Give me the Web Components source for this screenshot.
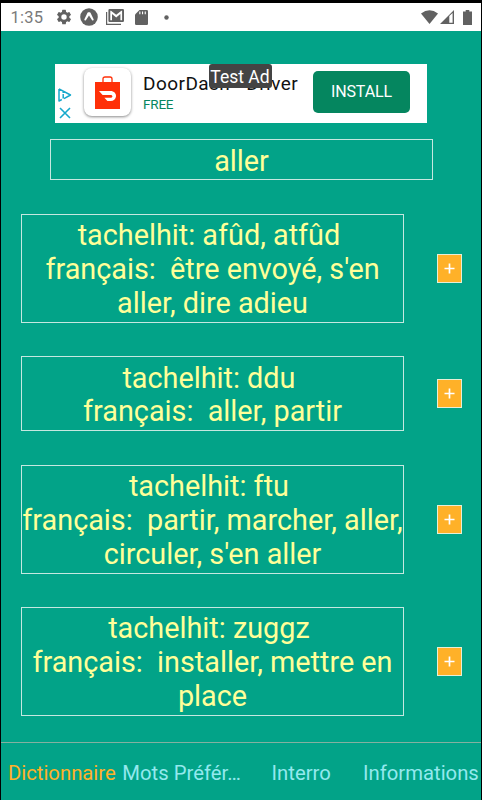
<!DOCTYPE html>
<html lang="fr">
<head>
<meta charset="utf-8">
<title>Dictionnaire</title>
<style>
html,body{margin:0;height:100%;background:#000;overflow:hidden}
body{font-family:Roboto,"Noto Sans",sans-serif}
</style>
</head>
<body>
<dict-app></dict-app>
<script>
const define = (name, html) => {
  const t = document.createElement('template');
  t.innerHTML = html;
  customElements.define(name, class extends HTMLElement {
    constructor() {
      super();
      this.attachShadow({ mode: 'open' }).append(t.content.cloneNode(true));
    }
  });
};

define('status-bar', `
<style>
:host{display:flex;align-items:center;justify-content:space-between;height:28px;box-sizing:border-box;background:#fff;color:#7a7a7a;padding:0 9px 0 9.500px;font-size:16.5px;letter-spacing:.2px}
.l,.r{display:flex;align-items:center}
svg{display:block;fill:#616161}
.time{width:44px;line-height:28px;padding-top:2px;white-space:nowrap}
</style>
<div class="l">
  <span class="time">1:35</span>
  <svg width="18" height="18" viewBox="0 0 24 24"><path d="M19.14 12.94c.04-.3.06-.61.06-.94s-.02-.64-.07-.94l2.03-1.58a.5.5 0 0 0 .12-.61l-1.92-3.32a.49.49 0 0 0-.59-.22l-2.39.96a7 7 0 0 0-1.62-.94l-.36-2.54A.48.48 0 0 0 13.92 2.400h-3.840a.48.48 0 0 0-.47.41l-.36 2.540a7 7 0 0 0-1.620.94l-2.390-.96a.48.48 0 0 0-.59.22L2.740 8.870a.48.48 0 0 0 .12.61l2.030 1.580a6 6 0 0 0 0 1.880l-2.030 1.580a.5.5 0 0 0-.12.61l1.920 3.320c.12.22.37.29.59.22l2.390-.96c.5.38 1.030.7 1.620.94l.36 2.540c.05.24.24.41.47.41h3.840c.24 0 .44-.17.47-.41l.36-2.540a7 7 0 0 0 1.620-.94l2.390.96c.22.08.47 0 .59-.22l1.920-3.320a.48.48 0 0 0-.12-.61zM12 15.600a3.600 3.600 0 1 1 0-7.200 3.600 3.600 0 0 1 0 7.200z"/></svg>
  <svg style="margin-left:7.500px" width="18" height="18" viewBox="0 0 18 18"><circle cx="9" cy="9" r="8.800"/><path fill="#fff" d="M8.200 4.300h1.600c.4 0 .6.3.8.700l3 6.300c.4.900-.8 1.700-1.500.9L9 7.500l-3.100 4.700c-.7.800-1.900 0-1.500-.9l3-6.300c.2-.4.400-.7.8-.7z"/></svg>
  <svg style="margin-left:8px" width="18" height="16" viewBox="0 0 18 16"><path d="M0 3h1.200v11.800H15V16H0z"/><path fill-rule="evenodd" d="M3.600 0h13.200q1.200 0 1.200 1.200v10.600q0 1.200-1.200 1.200H3.600q-1.200 0-1.200-1.200V1.200Q2.400 0 3.600 0zM4.300 1.700v9.600h1.700V5l4.200 3.400L14.400 5v6.300h1.700V1.700h-.7l-5.200 4.100L5 1.700z"/></svg>
  <svg style="margin-left:10.500px" width="13" height="15" viewBox="0 0 13 15"><path d="M4.500 0h7.300Q13 0 13 1.200v12.600q0 1.200-1.200 1.200H1.200Q0 15 0 13.800V4.500z"/><path fill="#fff" d="M4.300 1.600h1.100v2.600H4.300zM7 1.600h1.100v2.600H7zM9.700 1.600h1.100v2.600H9.700z"/></svg>
  <svg style="margin-left:16px" width="5" height="5" viewBox="0 0 5 5"><circle cx="2.500" cy="2.500" r="2.200"/></svg>
</div>
<div class="r">
  <svg width="17" height="14" viewBox="0 0 17 14"><path d="M0 3.500Q8.500-3.100 17 3.500L8.500 14z"/></svg>
  <svg style="margin-left:2px" width="14" height="14" viewBox="0 0 14 14"><path fill-rule="evenodd" d="M0 14 14 0v14zM9.300 6v6.700h3.300V3z"/></svg>
  <svg style="margin-left:9px" width="9" height="15" viewBox="0 0 9 15"><path d="M2.700 0h3.600v1.400H9V15H0V1.400h2.700z"/></svg>
</div>`);

define('ad-banner', `
<style>
:host{display:flex;position:relative;width:372.500px;height:58.500px;box-sizing:border-box;background:#fff;padding:0 17px 0 3px}
.marks{display:flex;flex-direction:column;gap:5px;padding-top:24px;width:26px}
svg{display:block}
.logo{width:47px;height:48px;margin-top:4px;border-radius:8px;box-shadow:0 1px 3px #0007;display:flex;justify-content:center;align-items:center}
.copy{padding-left:12.500px;flex:1;white-space:nowrap}
.name{font-size:19px;line-height:22px;padding-top:9px;color:#111;letter-spacing:.45px}
.free{font-size:13.500px;line-height:15px;margin-top:2px;color:#078660;letter-spacing:-.2px}
.btn{width:97px;height:42px;margin-top:7px;border-radius:5px;background:#05865f;color:#fff;font-size:16px;letter-spacing:-.1px;line-height:42px;text-align:center}
.tag{position:absolute;left:154px;top:0;width:63px;height:24px;border-radius:3px;background:#444;color:#fff;font-size:17.500px;line-height:26px;text-align:center;white-space:nowrap}
</style>
<div class="marks">
  <svg width="14" height="14" viewBox="0 0 14 14" fill="none" stroke="#16a9cc" stroke-width="1.500"><path d="M1 .9v12.200l2.800-1.600M1 .9 12.500 7 6 10.600M5.200 6v4.500M5.200 3.700v1.400" stroke-linejoin="round"/></svg>
  <svg width="14" height="12" viewBox="0 0 14 12" fill="none" stroke="#16a9cc" stroke-width="1.600"><path d="M2 1l10 10M12 1 2 11"/></svg>
</div>
<div class="logo"><svg width="25" height="33" viewBox="0 0 25 33"><path d="M8 6V3q0-2 2-2h5q2 0 2 2v3" fill="none" stroke="#ff3008" stroke-width="1.300"/><path fill="#ff3008" d="M0 6h25v27H0z"/><path fill="#fff" d="M4 15h11.500c3.500 0 5.800 2.500 5.500 5.400-.3 2.600-2.500 4.600-5.300 4.600h-3.300l-3-3.200h6.200c2.400 0 2.400-2.800 0-2.800H7.600z"/></svg></div>
<div class="copy"><div class="name">DoorDash - Driver</div><div class="free">FREE</div></div>
<div class="btn">INSTALL</div>
<div class="tag">Test Ad</div>`);

define('search-box', `
<style>:host{display:block;box-sizing:border-box;width:383px;height:41px;border:1px solid #c5e8e0;color:#ffff99;font-size:28.800px;line-height:42px;text-align:center}</style><slot></slot>`);

define('add-button', `
<style>:host{display:flex;align-items:center;justify-content:center;box-sizing:border-box;width:25px;height:29px;border:1px solid #e6efd6;background:#ffb128}svg{display:block}</style>
<svg width="11" height="11" viewBox="0 0 11 11"><path d="M5.500 .5v10M.5 5.500h10" stroke="#fff" stroke-width="1.700"/></svg>`);

define('word-entry', `
<style>
:host{display:flex;align-items:center;gap:33px}
.card{box-sizing:border-box;width:383px;border:1px solid #c5e8e0;padding:4.200px 0 1.200px;color:#ffff99;font-size:28.800px;line-height:33.750px;text-align:center;white-space:pre}
::slotted(span){display:block}
</style>
<div class="card"><slot></slot></div><add-button></add-button>`);

define('tab-bar', `
<style>
:host{display:grid;grid-template-columns:repeat(4,119.700px);height:58px;box-sizing:border-box;border-top:1px solid #84b0a0;color:#93e9ee;font-size:20.300px;line-height:60px;padding-left:1px;text-align:center;white-space:nowrap}
::slotted(.on){color:#ffb128}
</style><slot></slot>`);

define('dict-app', `
<style>
:host{display:flex;flex-direction:column;box-sizing:border-box;width:482px;height:800px;background:#000;padding:3px 1px 0 1px}
.body{flex:1;display:flex;flex-direction:column;background:#02a388;min-height:0}
ad-banner{margin:33px 0 0 53.500px}
search-box{margin:16px 0 0 49px}
.list{display:flex;flex-direction:column;gap:33.600px;padding:34.700px 0 0 20px;flex:1;min-height:0}
</style>
<status-bar></status-bar>
<div class="body">
  <ad-banner></ad-banner>
  <search-box>aller</search-box>
  <div class="list">
    <word-entry><span>tachelhit: afûd, atfûd </span><span>français:  être envoyé, s'en</span><span>aller, dire adieu</span></word-entry>
    <word-entry><span>tachelhit: ddu </span><span>français:  aller, partir</span></word-entry>
    <word-entry><span>tachelhit: ftu </span><span>français:  partir, marcher, aller,</span><span>circuler, s'en aller</span></word-entry>
    <word-entry><span>tachelhit: zuggz </span><span>français:  installer, mettre en</span><span>place</span></word-entry>
  </div>
  <tab-bar><span class="on">Dictionnaire</span><span>Mots Préfér…</span><span>Interro</span><span>Informations</span></tab-bar>
</div>`);
</script>
</body>
</html>
